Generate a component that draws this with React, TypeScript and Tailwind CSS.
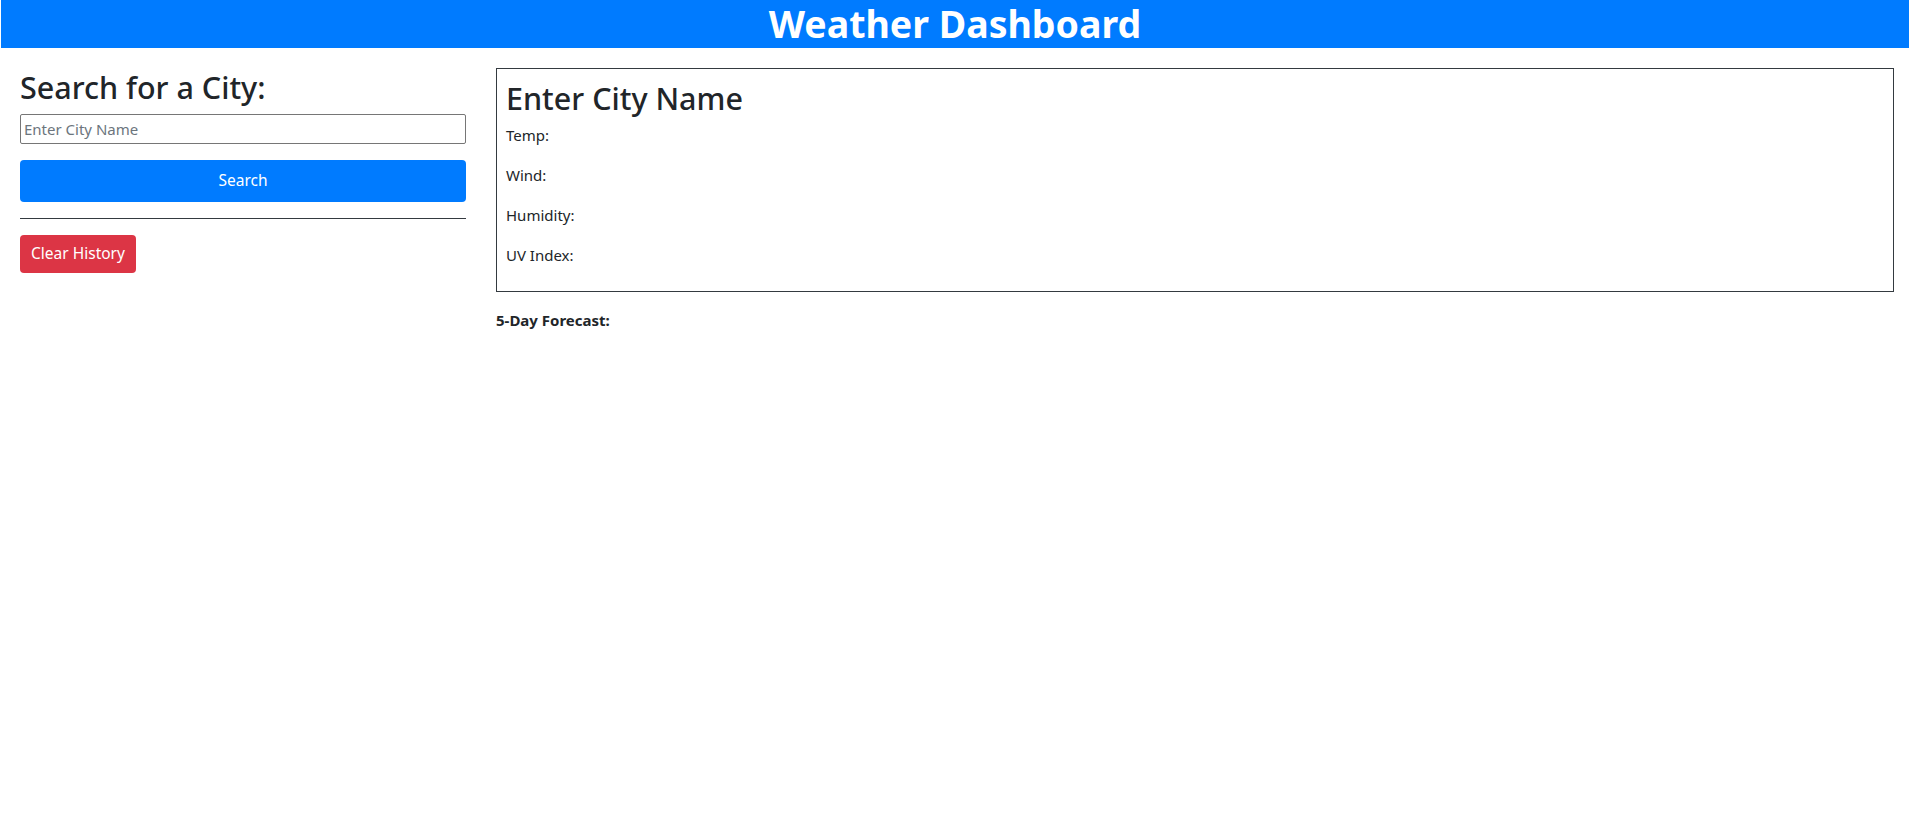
import React from 'react';

export default function App() {
  return (
    <div className="min-h-screen bg-white text-[#212529]" style={{ fontFamily: '"Noto Sans", "Open Sans", sans-serif' }}>
      {/* Header */}
      <header className="ml-px bg-[#007bff] h-[48px] flex items-center justify-center">
        <h1 className="text-[37.5px] leading-[48px] font-bold text-white">Weather Dashboard</h1>
      </header>

      <div className="flex pl-[20px] pr-[15px] gap-[30px] pt-[20px]">
        {/* Search column */}
        <aside className="w-[446px] shrink-0">
          <h2 className="text-[30.5px] leading-[38px] font-medium">Search for a City:</h2>
          <input
            type="text"
            placeholder="Enter City Name"
            className="mt-[8px] block w-full h-[30px] border border-[#767676] rounded-[2px] px-[3px] text-[15px] placeholder:text-[#6c757d] outline-none"
          />
          <button className="mt-[16px] w-full h-[42px] bg-[#007bff] text-white text-[15.5px] rounded-[4px]">
            Search
          </button>
          <hr className="mt-[16px] border-t border-[#343a40]" />
          <button className="mt-[16px] h-[38px] w-[116px] bg-[#dc3545] text-white text-[15.5px] rounded-[4px]">
            Clear History
          </button>
        </aside>

        {/* Current weather */}
        <main className="flex-1">
          <section className="border border-[#343a40] h-[224px] px-[9px] pt-[10px]">
            <h2 className="text-[30.5px] leading-[38px] font-medium mb-[6px]">Enter City Name</h2>
            <p className="text-[15px] leading-[24px] mb-[16px]">Temp:</p>
            <p className="text-[15px] leading-[24px] mb-[16px]">Wind:</p>
            <p className="text-[15px] leading-[24px] mb-[16px]">Humidity:</p>
            <p className="text-[15px] leading-[24px] mb-[16px]">UV Index:</p>
          </section>
          <h3 className="mt-[16px] text-[15px] leading-[24px] font-bold">5-Day Forecast:</h3>
        </main>
      </div>
    </div>
  );
}
